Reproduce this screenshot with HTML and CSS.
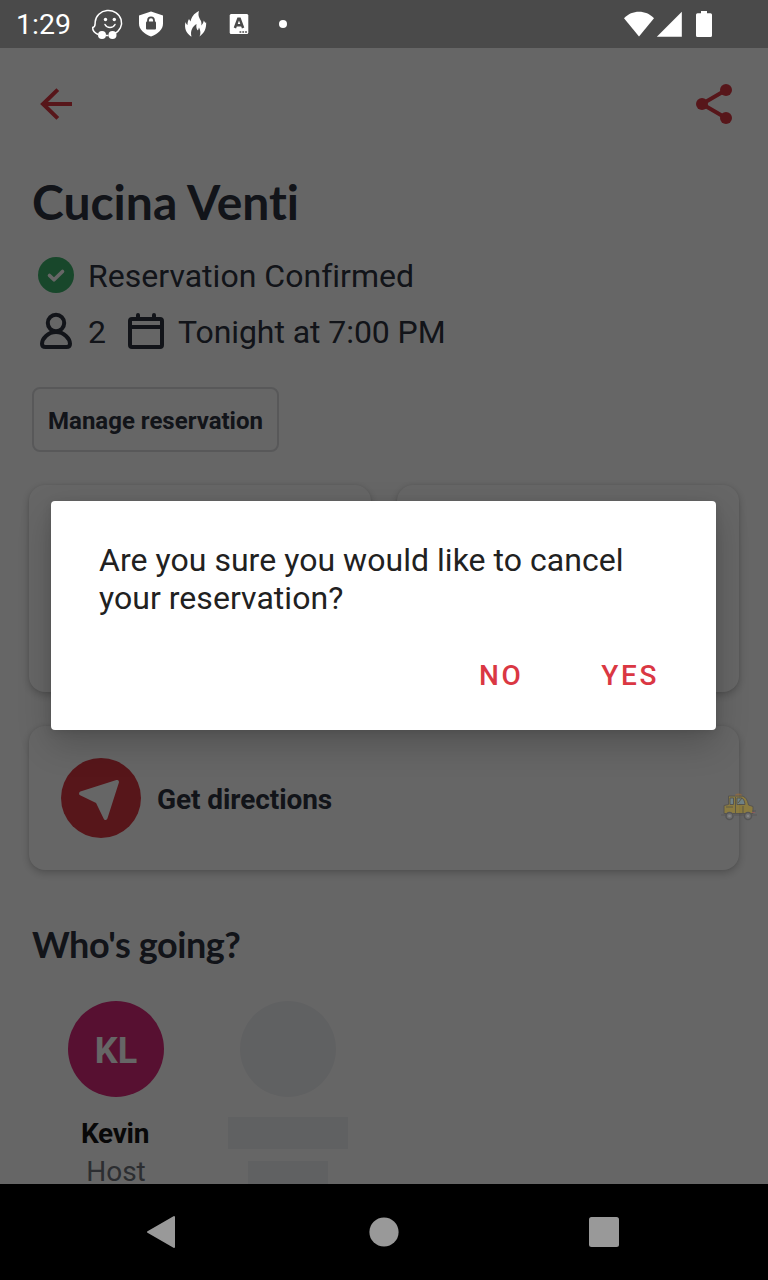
FILE: index.html
```
<!DOCTYPE html>
<html lang="en">
<head>
<meta charset="utf-8">
<title>Cucina Venti</title>
<link rel="stylesheet" href="styles.css">
</head>
<body>
<div class="phone">
  <header class="status">
    <span class="clock">1:29</span>
    <svg class="status-left" width="210" height="48" viewBox="86 0 210 48">
      <path d="M98 34.500C95 33 92.500 30 92.700 27.500C95.500 27 95 25 95.200 22A13.200 12.400 0 1 1 114 34M106 35.500h2.500" fill="none" stroke="#fff" stroke-width="1.500"/>
      <circle cx="102" cy="35" r="4" fill="#fff"/><circle cx="112.500" cy="35" r="4" fill="#fff"/>
      <circle cx="105.500" cy="19.500" r="1.700" fill="#fff"/><circle cx="114.300" cy="19.500" r="1.700" fill="#fff"/>
      <path d="M105 24.500c2 4 8 4 10 0" fill="none" stroke="#fff" stroke-width="1.500" stroke-linecap="round"/>
      <path d="M151 11.500l12 4v8c0 6-5 10.500-12 13c-7-2.500-12-7-12-13v-8z" fill="#fff"/>
      <rect x="146" y="21.500" width="10" height="8" rx="1" fill="#4a4a4a"/>
      <path d="M148 22v-1.500a3 3.200 0 0 1 6 0v1.500" fill="none" stroke="#4a4a4a" stroke-width="1.800"/>
      <path d="M191 36.500C186 33 184 28 185.500 22c.5 1.500 1 2.300 2 3c0-2 .3-4 1.500-6l1.500 2.500c1-4 3-8 8.500-10.500c-1.500 5 .5 7 2 10c.6 1.500.5 3 .3 4.500c1.500-1.500 2-3 2.500-5l1.500 2.500l.8-1c.5 6-1.600 11-6.600 14.500c1.500-3 1-6-.5-9l-1 3c-1.500-1-2-3.500-1.500-6.500c-4 2.500-6.500 7-5 12.500z" fill="#fff"/>
      <rect x="229.700" y="14" width="18.600" height="20" rx="1.500" fill="#fff"/>
      <path d="M234.900 28l3.400-9.200h1.400l3.400 9.200M236.500 25.200h5" fill="none" stroke="#4a4a4a" stroke-width="2.500"/>
      <path d="M239.500 32h1.800m1 0h1.800m1 0h1.800" stroke="#4a4a4a" stroke-width="1.600"/>
      <circle cx="283" cy="24" r="4" fill="#fff"/>
    </svg>
    <svg class="status-right" width="92" height="48" viewBox="622 0 92 48" fill="#fff">
      <path d="M639 36.500L624 18.300c8-8.600 22-8.600 30 0z"/>
      <path d="M681.800 11.700V36.700H656.800z"/>
      <path d="M701 11h6v2.300h3.500q1.500 0 1.500 1.500v20.700q0 1.500-1.500 1.500h-13q-1.500 0-1.500-1.500V14.800q0-1.500 1.500-1.500h3.500z"/>
    </svg>
  </header>

  <main class="page">
    <nav class="toolbar">
      <svg width="48" height="48" viewBox="32 80 48 48" fill="none" stroke="#da3743" stroke-width="4"><path d="M72 104H43M57.800 89.600L43 104l14.800 14.400"/></svg>
      <svg width="48" height="48" viewBox="690 80 48 48"><path d="M726 90l-24 14l24 14" fill="none" stroke="#da3743" stroke-width="4"/><g fill="#da3743"><circle cx="726" cy="90" r="6"/><circle cx="702" cy="104" r="6"/><circle cx="726" cy="118" r="6"/></g></svg>
    </nav>
    <h1 class="title">Cucina Venti</h1>
    <div class="row">
      <svg class="row-icon" width="48" height="48" viewBox="32 251 48 48"><circle cx="56" cy="275" r="18" fill="#3db26b"/><path d="M49.500 275.500l4.500 4.300l8.500-8.300" fill="none" stroke="#fff" stroke-width="3.600" stroke-linecap="round" stroke-linejoin="round"/></svg>
      <span class="confirmed">Reservation Confirmed</span>
    </div>
    <div class="row">
      <svg class="row-icon" width="48" height="48" viewBox="32 307 48 48" fill="none" stroke="#2d333f" stroke-width="4"><circle cx="56" cy="323" r="8.200"/><path d="M56 332c-8 0-14 6.500-14 11.800q0 3.200 3.500 3.200h21q3.500 0 3.500-3.200c0-5.300-6-11.800-14-11.800z"/></svg>
      <span class="count">2</span>
      <svg class="row-icon" width="48" height="48" viewBox="122 307 48 48" fill="none" stroke="#2d333f" stroke-width="4"><rect x="130" y="319" width="32" height="28" rx="2"/><path d="M130 327h32"/><path d="M138 319v-4m16 4v-4" stroke-linecap="round"/></svg>
      <span class="time">Tonight at 7:00 PM</span>
    </div>
    <button class="manage"><span>Manage reservation</span></button>
    <div class="cards">
      <div class="card"></div>
      <div class="card"></div>
    </div>
    <div class="card directions">
      <svg width="80" height="80" viewBox="61 758 80 80"><circle cx="101" cy="798" r="40" fill="#da3743"/><path d="M81 793.500L117 782L105.500 818L97.500 801.500z" fill="#fff" stroke="#fff" stroke-width="4" stroke-linejoin="round"/></svg>
      <span class="directions-label">Get directions</span>
    </div>
    <h2 class="subtitle">Who's going?</h2>
    <div class="guests">
      <div class="guest">
        <div class="avatar"><span>KL</span></div>
        <strong class="name">Kevin</strong>
        <span class="role">Host</span>
      </div>
      <div class="guest">
        <div class="avatar empty"></div>
        <div class="bar"></div>
        <div class="bar short"></div>
      </div>
    </div>
  </main>

  <footer class="sysnav">
    <svg width="48" height="48" viewBox="137 1208 48 48"><path d="M148 1232l26-15v30z" fill="#999" stroke="#999" stroke-width="2" stroke-linejoin="round"/></svg>
    <svg width="48" height="48" viewBox="359 1208 48 48"><circle cx="384" cy="1232" r="14.600" fill="#999"/></svg>
    <svg width="48" height="48" viewBox="580 1208 48 48"><rect x="589" y="1217" width="30" height="30" rx="2.500" fill="#999"/></svg>
  </footer>

  <div class="scrim"></div>
  <section class="dialog" role="alertdialog">
    <p class="message"><span>Are you sure you would like to cancel</span><br><span>your reservation?</span></p>
    <div class="actions"><span class="no">NO</span><span class="yes">YES</span></div>
  </section>
  <svg class="taxi" width="38" height="32" viewBox="720 790 38 32">
    <path d="M724 813.500v-8l4.500-1v-8.500h12.500c4 0 6.500 3.500 7.500 9l4.500 1.500v7z" fill="#a58a28" stroke="#4d4a43"/>
    <path d="M735 795.500q0-2 3.500-2t3.500 2z" fill="#a06c32"/>
    <path d="M730 798h3.500v6.500H730zM737 798h3.500c3 0 4 3 4.500 6.500h-8z" fill="#79979d" stroke="#4d4a43"/>
    <path d="M738 803l4-5M735.500 797v16M743 806v7M726 807h7" stroke="#57502f" fill="none"/>
    <path d="M752 811h4M721 815h7m6 0h10m7 0h6" stroke="#514d4d" fill="none"/>
    <path d="M752 812.500h3" stroke="#a35356"/>
    <circle cx="729.500" cy="816" r="3.500" fill="#777" stroke="#4b4b4b" stroke-width="1.500"/>
    <circle cx="748" cy="816" r="3.500" fill="#777" stroke="#4b4b4b" stroke-width="1.500"/>
    <circle cx="729.500" cy="816" r="1.300" fill="#999"/><circle cx="748" cy="816" r="1.300" fill="#999"/>
  </svg>
</div>
</body>
</html>
```
FILE: styles.css
```
* { box-sizing: border-box; margin: 0; }
body { background: #000; font-family: Roboto, sans-serif; color: #2d333f; }
svg { display: block; flex: none; }
span, strong { white-space: nowrap; }

.phone { position: relative; width: 768px; height: 1280px; overflow: hidden; display: flex; flex-direction: column; background: #fff; }
.status { position: relative; z-index: 2; flex: none; height: 48px; background: #4a4a4a; display: flex; align-items: center; padding: 0 54px 0 16px; color: #fff; }
.clock { width: 70px; font-size: 28.5px; line-height: 50px; padding-top: 2px; }
.status-right { margin-left: auto; }

.page { flex: none; height: 1136px; padding: 32px 28px 0; }
.toolbar { display: flex; justify-content: space-between; height: 48px; padding: 0 2px 0 4px; }
.title { margin: 44px 0 0 4px; font: 700 48px/60px Lato, sans-serif; font-variant-ligatures: none; white-space: nowrap; }
.row { display: flex; align-items: center; height: 48px; padding-left: 4px; margin-top: 19px; }
.row + .row { margin-top: 8px; }
.row span { font-size: 32px; line-height: 48px; padding-top: 2px; }
.row .confirmed { margin-left: 8px; letter-spacing: 0.02px; }
.count { margin-left: 8px; width: 34px; }
.row .time { margin-left: 8px; letter-spacing: -0.07px; }
.manage { display: flex; align-items: center; justify-content: center; margin: 32px 0 0 4px; width: 247px; height: 65px; padding: 3px 0 0; border: 2px solid #dbdcdf; border-radius: 8px; background: none; font: bold 24px/30px Roboto, sans-serif; color: #2d333f; }
.cards { display: flex; gap: 26px; margin: 33px 1px 0; }
.card { flex: 1; height: 207px; border-radius: 16px; background: #fff; box-shadow: 0 3px 8px rgba(0,0,0,.22), 0 0 3px rgba(0,0,0,.07); }
.directions { display: flex; height: 144px; margin: 34px 1px 0; padding: 32px; gap: 16px; }
.directions-label { font-size: 28px; line-height: 80px; padding-top: 2px; font-weight: 700; letter-spacing: -0.08px; }
.subtitle { margin: 52px 0 0 4px; font: 700 36px/44px Lato, sans-serif; letter-spacing: -0.45px; white-space: nowrap; }
.guests { display: flex; gap: 52px; margin: 35px 0 0 28px; }
.guest { width: 120px; display: flex; flex-direction: column; align-items: center; }
.avatar { width: 96px; height: 96px; border-radius: 50%; background: #d9297b; display: flex; align-items: center; justify-content: center; font-size: 36px; font-weight: 700; color: #fff; padding-top: 3px; flex: none; }
.empty { background: #f1f2f5; }
.name { margin: 18px 2px 0 0; font-size: 28px; line-height: 38px; color: #161616; letter-spacing: -0.3px; }
.role { margin-top: 7px; font-size: 28px; line-height: 24px; color: #6f737b; }
.bar { width: 120px; height: 32px; margin-top: 20px; background: #f1f2f5; }
.short { width: 80px; margin-top: 12px; }

.sysnav { position: relative; z-index: 2; height: 96px; background: #000; display: flex; align-items: center; justify-content: space-between; padding: 0 140px 0 137px; }
.scrim { position: absolute; inset: 48px 0 96px; background: rgba(0,0,0,.6); }
.dialog { position: absolute; left: 51px; top: 501px; width: 665px; height: 229px; padding: 40px 57px 0 48px; border-radius: 4px; background: #fff; box-shadow: 0 14px 34px rgba(0,0,0,.2), 0 2px 10px rgba(0,0,0,.1); }
.message { font-size: 32px; line-height: 38px; color: #212121; letter-spacing: 0.04px; }
.actions { display: flex; justify-content: flex-end; gap: 78px; margin-top: 38px; font-size: 28px; line-height: 42px; font-weight: 500; letter-spacing: 2.6px; color: #da3743; }
.taxi { position: absolute; left: 720px; top: 790px; opacity: .6; }
```
